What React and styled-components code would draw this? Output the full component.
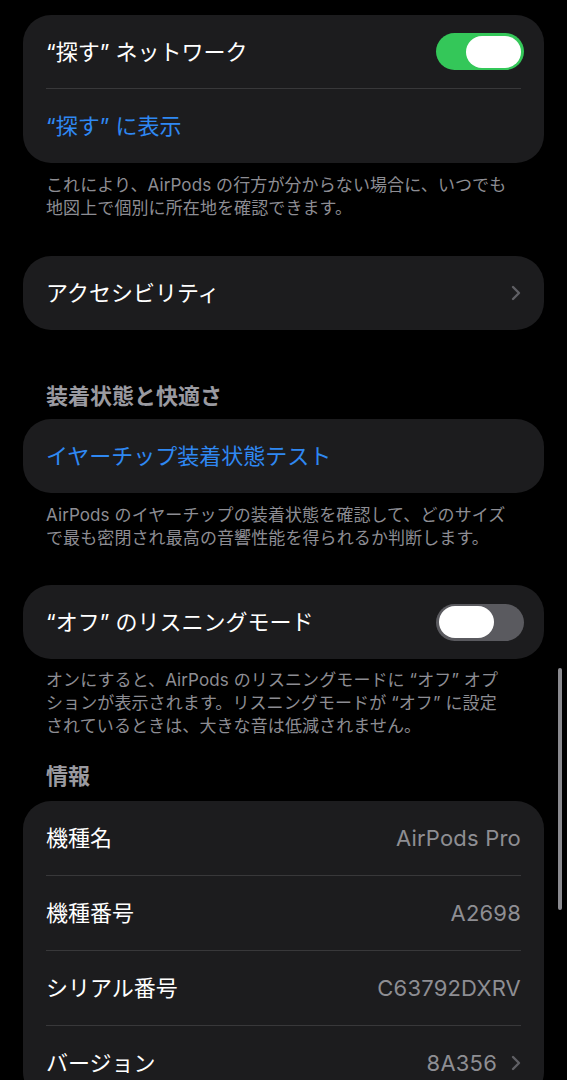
import React from "react";
import styled, { createGlobalStyle } from "styled-components";

const Global = createGlobalStyle`
  html, body {
    margin: 0;
    padding: 0;
    background: #000;
    height: 1080px;
    overflow: hidden;
  }
  body {
    font-family: Inter, "Noto Sans CJK JP", "Noto Sans", sans-serif;
    -webkit-font-smoothing: antialiased;
  }
`;

const Page = styled.div`
  display: flex;
  flex-direction: column;
  padding: 15px 23px 0 23px;
  background: #000;
  height: 1080px;
  box-sizing: border-box;
  position: relative;
`;

const Card = styled.div`
  background: #1c1c1e;
  border-radius: 28px;
  display: flex;
  flex-direction: column;
  margin-top: ${(p) => p.$mt || 0}px;
  flex-shrink: 0;
`;

const Row = styled.div`
  display: flex;
  align-items: center;
  justify-content: space-between;
  height: ${(p) => p.$h || 74}px;
  padding: 0 ${(p) => (p.$toggle ? 20 : 23)}px 0 23px;
  box-sizing: border-box;
`;

const Label = styled.span`
  font-size: 22px;
  line-height: 28px;
  color: ${(p) => (p.$blue ? "#2f88f2" : "#ffffff")};
  white-space: nowrap;
`;

const Value = styled.span`
  display: flex;
  align-items: center;
  gap: 14px;
  font-size: 22px;
  line-height: 28px;
  color: #8e8e93;
  white-space: nowrap;
  letter-spacing: 0.2px;
`;

const Separator = styled.div`
  height: 1px;
  margin: 0 23px;
  background: #38383a;
`;

const Footer = styled.p`
  margin: 0;
  padding: ${(p) => p.$pt || 11}px 23px 0 23px;
  font-size: 17px;
  line-height: 23px;
  color: #8d8d93;
  white-space: nowrap;
  letter-spacing: 0.1px;
`;

const Header = styled.h2`
  margin: ${(p) => p.$mt}px 0 0 0;
  padding: 0 23px;
  font-size: 22px;
  line-height: 28px;
  font-weight: 600;
  color: #9a9aa0;
`;

const Track = styled.span`
  display: flex;
  align-items: center;
  justify-content: ${(p) => (p.$on ? "flex-end" : "flex-start")};
  width: 88px;
  height: 37px;
  padding: 0 3px;
  box-sizing: border-box;
  border-radius: 19px;
  background: ${(p) => (p.$on ? "#34c759" : "#5a5a5f")};
  flex-shrink: 0;
`;

const Knob = styled.span`
  width: 55px;
  height: 32px;
  border-radius: 16px;
  background: #ffffff;
`;

const ScrollBar = styled.div`
  position: absolute;
  right: 5px;
  top: 668px;
  width: 4px;
  height: 242px;
  border-radius: 2px;
  background: #8a8a8f;
`;

const Chevron = () => (
  <svg width="10" height="16" viewBox="0 0 10 16" fill="none">
    <path
      d="M2 2l6 6-6 6"
      stroke="#5f5f64"
      strokeWidth="2.4"
      strokeLinecap="round"
      strokeLinejoin="round"
    />
  </svg>
);

const Toggle = ({ on }) => (
  <Track $on={on}>
    <Knob />
  </Track>
);

export default function App() {
  return (
    <>
      <Global />
      <Page>
        <Card>
          <Row $h={73} $toggle>
            <Label>“探す” ネットワーク</Label>
            <Toggle on />
          </Row>
          <Separator />
          <Row $h={74}>
            <Label $blue>“探す” に表示</Label>
          </Row>
        </Card>
        <Footer>
          これにより、AirPods の行方が分からない場合に、いつでも
          <br />
          地図上で個別に所在地を確認できます。
        </Footer>

        <Card $mt={36}>
          <Row>
            <Label>アクセシビリティ</Label>
            <Chevron />
          </Row>
        </Card>

        <Header $mt={52}>装着状態と快適さ</Header>
        <Card $mt={9}>
          <Row>
            <Label $blue>イヤーチップ装着状態テスト</Label>
          </Row>
        </Card>
        <Footer>
          AirPods のイヤーチップの装着状態を確認して、どのサイズ
          <br />
          で最も密閉され最高の音響性能を得られるか判断します。
        </Footer>

        <Card $mt={35}>
          <Row $toggle>
            <Label>“オフ” のリスニングモード</Label>
            <Toggle on={false} />
          </Row>
        </Card>
        <Footer $pt={10}>
          オンにすると、AirPods のリスニングモードに “オフ” オプ
          <br />
          ションが表示されます。リスニングモードが “オフ” に設定
          <br />
          されているときは、大きな音は低減されません。
        </Footer>

        <Header $mt={24}>情報</Header>
        <Card $mt={11}>
          <Row>
            <Label>機種名</Label>
            <Value>AirPods Pro</Value>
          </Row>
          <Separator />
          <Row>
            <Label>機種番号</Label>
            <Value>A2698</Value>
          </Row>
          <Separator />
          <Row>
            <Label>シリアル番号</Label>
            <Value>C63792DXRV</Value>
          </Row>
          <Separator />
          <Row>
            <Label>バージョン</Label>
            <Value>
              8A356
              <Chevron />
            </Value>
          </Row>
        </Card>
        <ScrollBar />
      </Page>
    </>
  );
}
